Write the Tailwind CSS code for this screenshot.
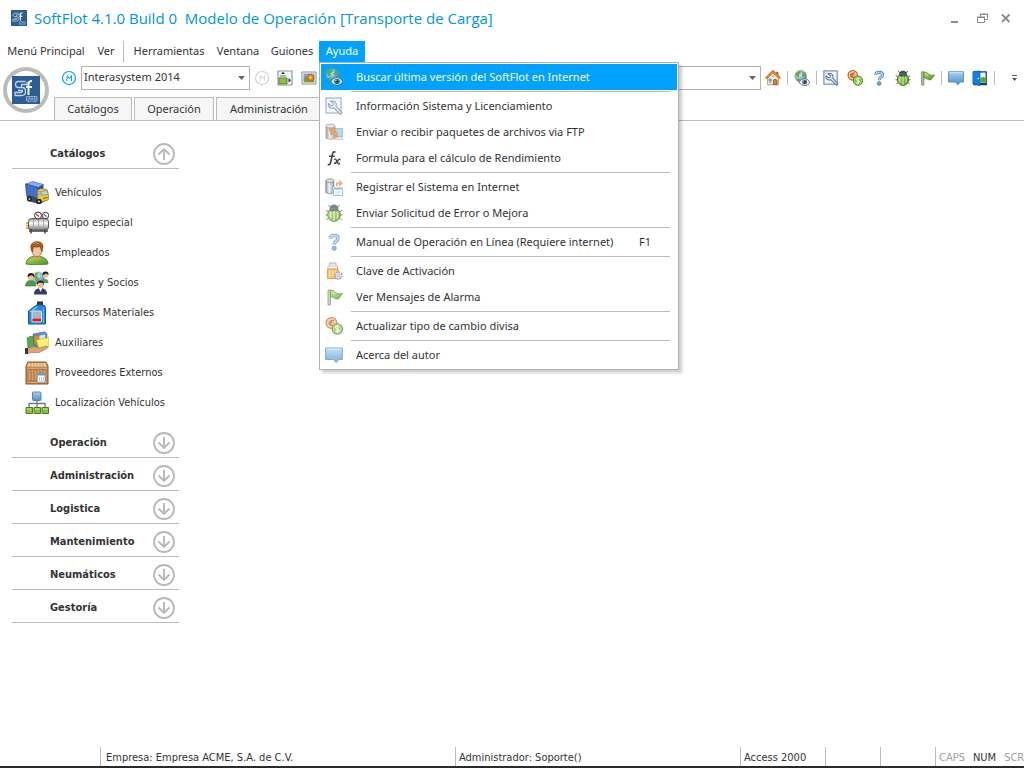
<!DOCTYPE html>
<html lang="es">
<head>
    <meta charset="UTF-8">
    <meta name="viewport" content="width=device-width, initial-scale=1.0">
    <title>SoftFlot 4.1.0</title>
    <script src="https://cdn.jsdelivr.net/npm/@tailwindcss/browser@4"></script>
</head>
<body class="min-h-screen flex flex-col overflow-hidden bg-white text-[#333333] text-[11px] font-['Noto_Sans','Open_Sans',sans-serif]">

    <!-- Icon definitions -->
    <svg class="absolute size-0" aria-hidden="true">
        <defs>
            <linearGradient id="gBlue" x1="0" y1="0" x2="0" y2="1"><stop offset="0" stop-color="#a9d3f2"/><stop offset="1" stop-color="#4a8fc9"/></linearGradient>
            <linearGradient id="gGreen" x1="0" y1="0" x2="1" y2="1"><stop offset="0" stop-color="#b5e06a"/><stop offset="1" stop-color="#4c8f1c"/></linearGradient>
            <linearGradient id="gSilver" x1="0" y1="0" x2="1" y2="0"><stop offset="0" stop-color="#6b6b6b"/><stop offset=".4" stop-color="#f0f0f0"/><stop offset="1" stop-color="#808080"/></linearGradient>
            <linearGradient id="gTank" x1="0" y1="0" x2="0" y2="1"><stop offset="0" stop-color="#9a9a9a"/><stop offset=".4" stop-color="#ffffff"/><stop offset="1" stop-color="#777777"/></linearGradient>
            <radialGradient id="gGlobe" cx=".35" cy=".3" r=".8"><stop offset="0" stop-color="#e4f4ff"/><stop offset=".6" stop-color="#7db4dc"/><stop offset="1" stop-color="#2f6596"/></radialGradient>

            <symbol id="logo" viewBox="0 0 28 28">
                <rect width="28" height="28" fill="#2b5d93"/>
                <path d="M13.500 5.500H6.500Q3.500 5.500 3.500 8.500T6.500 11.500H9.500V8.500H15V6M9.500 11.500H10.500Q13.500 11.500 13.500 15.500T10 19.500H3V16.500H9.500Q10.500 16.500 10.500 14.500H6" fill="none" stroke="#c3d3e4" stroke-width="1.300"/>
                <path d="M16.500 19V8Q16.500 5 20 5M14 11H20" fill="none" stroke="#edf3f8" stroke-width="2"/>
                <path d="M14.500 20.500H25V25H14.500zM14.500 23H25M17.500 20.500V23M20 20.500V23M22.500 20.500V23M16.500 25V26.500M23 25V26.500" fill="none" stroke="#8fadcb"/>
            </symbol>

            <symbol id="globe" viewBox="0 0 18 18">
                <circle cx="7.500" cy="7" r="6.500" fill="url(#gGlobe)" stroke="#6d9480" stroke-width=".8"/>
                <path d="M2 4Q4 0.800 8 1L7.500 3.500L5.500 5.500L6 7.500L3.500 8Q1.500 6 2 4zM9.500 2L12.500 3.500L13.800 7L11 8L9 6zM3 10L6 9.500L7.500 12L6 13.200Q3.500 12 3 10z" fill="#76a82f"/>
                <path d="M5.500 14Q8 9.500 12 9.500T18 14Q15.500 17.500 12 17.500T5.500 14z" fill="#f4f7fa" stroke="#5d7186" stroke-width="1.100"/>
                <circle cx="12" cy="13.500" r="2.800" fill="#4b6681"/><circle cx="12" cy="13.500" r="1.200" fill="#0e1d33"/>
                <circle cx="11" cy="12.500" r=".7" fill="#ffffff"/>
            </symbol>

            <symbol id="wrench" viewBox="0 0 18 18">
                <rect x="1" y="1" width="15" height="15" fill="#f2f6fd" stroke="#7289b8" stroke-width="1.300"/>
                <path d="M5 4.200Q8 3 10.300 5Q11.800 6.800 11 9.200L17 15.500L15.500 17.300L9 11Q6.500 12 4.500 10.300Q3 8.800 3.300 6.500L6 8.800L8.300 8L8.200 5.800z" fill="#dce5f4" stroke="#66799f" stroke-width="1.200" stroke-linejoin="round"/>
            </symbol>

            <symbol id="ftp" viewBox="0 0 18 18">
                <path d="M1 3V15Q5 18 10 15V3z" fill="url(#gSilver)" stroke="#777777" stroke-width=".7"/>
                <ellipse cx="5.500" cy="3" rx="4.500" ry="2" fill="#dddddd" stroke="#777777" stroke-width=".7"/>
                <path d="M10 5.500H17.500V14H10z" fill="#8bd1f3" stroke="#5d9bc5" stroke-width=".7"/>
                <path d="M10 14H16.500L18 16.500H9z" fill="#e6edf4" stroke="#8898aa" stroke-width=".6"/>
                <path d="M4 5.500L10.500 5L9.300 7.300Q13 9 12.500 14Q10 15.500 9.500 14Q10 11 7.300 10L6 12z" fill="#ef7b22" stroke="#c45d13" stroke-width=".5"/>
            </symbol>

            <symbol id="fx" viewBox="0 0 18 18">
                <path d="M10.500 3.200Q8.200 2 7.500 5L5.500 14Q5 16.300 2.700 15.500M4 7.300H9.500" fill="none" stroke="#171717" stroke-width="1.600"/>
                <path d="M9 10.500Q10.500 9.500 11.300 11L12.700 14Q13.300 15.300 15 14.300M15.500 10.500Q14 9.800 12.500 12T9 14.700" fill="none" stroke="#171717" stroke-width="1.400"/>
            </symbol>

            <symbol id="register" viewBox="0 0 18 18">
                <path d="M.8 2.500V14.500Q5 17.500 8.800 14.500V2.500z" fill="url(#gSilver)" stroke="#555555" stroke-width=".8"/>
                <ellipse cx="5" cy="2.700" rx="4" ry="1.900" fill="#cfcfcf" stroke="#555555" stroke-width=".7"/>
                <path d="M11 8V4.500H14V1.500L18 5.500L14 9V6.500H13V8z" fill="#f0953e"/>
                <path d="M8.500 9.500H17.500V17.500H8.500z" fill="#ffffff" stroke="#58a6de" stroke-width=".9"/>
                <path d="M8.500 9.500H17.500V11.500H8.500zM10 14H16M10 16H14" fill="#58a6de" stroke="#a6cfec"/>
            </symbol>

            <symbol id="bug" viewBox="0 0 18 18">
                <path d="M3.500 1L5.500 3.500M14.500 1L12.500 3.500M.8 6L3.500 8M17.200 6L14.500 8M.5 11H3M17.500 11H15M1.500 16L4 13.500M16.500 16L14 13.500" stroke="#4b5c36" stroke-width="1"/>
                <path d="M5 5.500Q5 1 9 1T13 5.500z" fill="#42515f" stroke="#26313b" stroke-width=".7"/>
                <ellipse cx="9" cy="10.700" rx="6.300" ry="6.700" fill="url(#gGreen)" stroke="#3b6c1b"/>
                <path d="M4 6Q9 3.500 14 6Q11 8 9 7.500Q6 8 4 6z" fill="#42515f"/>
                <path d="M9 7V17M6 8Q4.500 11 6 14.500M12 8Q13.500 11 12 14.500" fill="none" stroke="#e3f4b9" stroke-width="1.100"/>
            </symbol>

            <symbol id="help" viewBox="0 0 18 18">
                <path d="M5.200 5.500Q5.500 2.500 9.200 2.500T13 5.300Q13 7 11 8.200Q9.200 9.300 9.200 11.500" fill="none" stroke="#447bb4" stroke-width="3.400"/>
                <path d="M5.200 5.300Q5.500 2.500 9.200 2.500T13 5.300Q13 7 11 8.200Q9.200 9.300 9.200 11.300" fill="none" stroke="#a9d0f0" stroke-width="1.800"/>
                <circle cx="9.200" cy="15.200" r="2" fill="#77acdc" stroke="#3468a3" stroke-width=".9"/>
            </symbol>

            <symbol id="clipboard" viewBox="0 0 18 18">
                <path d="M4.500 3V1H11V3" fill="#dddddd" stroke="#999999"/>
                <path d="M3 4H12.500V7H3z" fill="#ffffff" stroke="#a98957" stroke-width=".8"/>
                <path d="M2.500 7H13L14 16.500H2.500z" fill="#f5ad3c" stroke="#c98421"/>
                <path d="M5 9V15M8 9V13M11 9V11" stroke="#ffd788" stroke-width="1.300"/>
                <circle cx="13.500" cy="13.500" r="3.400" fill="#e9ebf5" stroke="#8186a8" stroke-width="1.800" stroke-dasharray="1.800 .8"/>
                <circle cx="13.500" cy="13.500" r="1.200" fill="#ffffff" stroke="#666d94" stroke-width=".8"/>
            </symbol>

            <symbol id="flag" viewBox="0 0 18 18">
                <path d="M3 2H5.500V17H3z" fill="#b6c89a" stroke="#667951" stroke-width=".8"/>
                <path d="M5.500 2.500Q8 1.500 10.500 4.500Q13.500 7 17.500 5.500L13.500 11Q10 11.500 8.500 9.500Q7 8.500 5.500 9z" fill="url(#gGreen)" stroke="#437d1c" stroke-width=".8"/>
                <path d="M7 4Q9 4 10 6.500" fill="none" stroke="#daf3a8"/>
            </symbol>

            <symbol id="coins" viewBox="0 0 18 18">
                <circle cx="6.500" cy="6" r="5.400" fill="#f2ae72" stroke="#bf6428" stroke-width="1.200"/>
                <circle cx="6.500" cy="6" r="3.900" fill="none" stroke="#fbd5ad" stroke-width=".8"/>
                <path d="M9 3.700Q5 2.500 5 6T9 8.500M3.500 5.300H7.500M3.500 7H7" fill="none" stroke="#b65a21" stroke-width="1.100"/>
                <circle cx="12.300" cy="12" r="5.200" fill="#83bb42" stroke="#49841d" stroke-width="1.100"/>
                <circle cx="12.300" cy="12" r="3.900" fill="none" stroke="#c5e796" stroke-width=".7"/>
                <path d="M14.200 10Q10.300 8.500 10.600 10.700Q11 12 12.500 12T14 13.600Q13.500 15 10.500 14M12.400 8.300V15.700" fill="none" stroke="#ffffff" stroke-width="1.100"/>
            </symbol>

            <symbol id="bubble" viewBox="0 0 18 18">
                <path d="M.7 2H17.300V13.500H14L11 16.500L8.500 13.500H.7z" fill="url(#gBlue)" stroke="#4b83b6" stroke-width="1"/>
                <path d="M1.700 3H16.300" stroke="#d2e9fa"/>
            </symbol>

            <symbol id="house" viewBox="0 0 18 18">
                <path d="M12.500 2H15V7H12.500z" fill="#c7501d"/>
                <path d="M3 9V16.500H15V9L9 3z" fill="#fff3df" stroke="#c88a45"/>
                <path d="M1 9.500L9 1.500L17 9.500" fill="none" stroke="#c9641c" stroke-width="2.600"/>
                <path d="M1.500 9.200L9 1.800L16.500 9.200" fill="none" stroke="#ffb35b"/>
                <path d="M9.500 16.500V11.500Q11 9 13.500 11.500V16.500z" fill="#bd8553" stroke="#754622" stroke-width=".8"/>
                <path d="M4.500 10H7.500V12.500H4.500zM4.500 14H7.500" fill="#8ebbe4" stroke="#5f80ae" stroke-width=".7"/>
                <path d="M7.500 7H10.500" stroke="#6d90bb"/>
            </symbol>

            <symbol id="door" viewBox="0 0 18 18">
                <path d="M2 2H16V16.500H2z" fill="#edf5fc" stroke="#123e7c" stroke-width="1.400"/>
                <path d="M9.500 9Q12 7 15.300 8.500V14H9.500z" fill="#4daf2c"/>
                <path d="M1 2L9 1V17.500L1 15.500z" fill="#147ee3" stroke="#0756ad" stroke-width=".7"/>
                <circle cx="7" cy="9.500" r=".9" fill="#ffffff"/>
                <path d="M9 14.500H16.500V16.500H9z" fill="#153d6b"/>
            </symbol>

            <symbol id="resize" viewBox="0 0 16 16">
                <path d="M1 1H15V15H1z" fill="#f4f6fb" stroke="#8895b5" stroke-width="1.200"/>
                <path d="M2 8H10V14H2z" fill="#90bd43" stroke="#5c892a"/>
                <path d="M3 6H9" stroke="#5c892a"/>
                <path d="M4 4L6 1.800L8 4zM11.500 8L14 10.200L11.500 12.500z" fill="#333333"/>
            </symbol>

            <symbol id="photo" viewBox="0 0 16 16">
                <path d="M1 2H15V14H1z" fill="#ffffff" stroke="#7f8bab"/>
                <path d="M2.500 3.500H13.500V7H2.500z" fill="#6fa8dc"/><path d="M2.500 7H13.500V12.500H2.500z" fill="#7aa037"/>
                <circle cx="9.500" cy="7.500" r="3.200" fill="#ef8a1e" stroke="#c85c12" stroke-width="1.500" stroke-dasharray="1.500 1"/>
                <circle cx="9.500" cy="7.500" r="1.200" fill="#ffd95b"/>
            </symbol>

            <symbol id="mark" viewBox="0 0 16 16">
                <circle cx="8" cy="8" r="6.500" fill="none" stroke="currentColor" stroke-width="1.200"/>
                <path d="M5.500 11L6.500 5.500L8.300 9L10.500 5.500V11" fill="none" stroke="currentColor"/>
            </symbol>

            <symbol id="arrowDown" viewBox="0 0 22 22">
                <circle cx="11" cy="11" r="10" fill="none" stroke="#b8b8b8" stroke-width="1.800"/>
                <path d="M11 5V16M5.500 10.500L11 16L16.500 10.500" fill="none" stroke="#b8b8b8" stroke-width="1.900"/>
            </symbol>
            <symbol id="arrowUp" viewBox="0 0 22 22">
                <circle cx="11" cy="11" r="10" fill="none" stroke="#b8b8b8" stroke-width="1.800"/>
                <path d="M11 17V6M5.500 11.500L11 6L16.500 11.500" fill="none" stroke="#b8b8b8" stroke-width="1.900"/>
            </symbol>

            <symbol id="truck" viewBox="0 0 24 24">
                <path d="M1 14L3 20L14 23L23 19V16z" fill="#414b58"/>
                <path d="M.5 3L8 .5L18.500 3.500L13 6.500z" fill="#86adf0" stroke="#3d62ad" stroke-width=".6"/>
                <path d="M.5 3L13 6.500V17.500L1.500 13.500z" fill="#3c69c4" stroke="#274b96" stroke-width=".7"/>
                <path d="M4 4.500V14M7 5.300V15M10 6V16" stroke="#6089d8" stroke-width=".7"/>
                <path d="M18.500 3.500V8L13 10V6.500z" fill="#274b96"/>
                <path d="M12.500 9L16 7.500L22 8.500L23.500 14V18.500L17 21L12.500 18z" fill="#f2c92f" stroke="#a37914" stroke-width=".7"/>
                <path d="M16 10.500L22 9.500L23 13.500L16.500 14.500zM13 10L15 10.500V14L13 13z" fill="#a8d6ed" stroke="#607d8b" stroke-width=".5"/>
                <path d="M18 17.500L22.500 16.500" stroke="#715a1c"/>
                <circle cx="4.500" cy="18" r="2.500" fill="#20252b"/><circle cx="14" cy="20.500" r="2.800" fill="#20252b"/>
                <circle cx="4.500" cy="18" r=".9" fill="#cccccc"/><circle cx="14" cy="20.500" r="1.100" fill="#cccccc"/>
            </symbol>

            <symbol id="tank" viewBox="0 0 24 24">
                <path d="M1 12H4M1 14.500H4M1 17H4" stroke="#e8a313" stroke-width="1.500"/>
                <rect x="3.500" y="7.500" width="20" height="11.500" rx="3" fill="url(#gTank)" stroke="#555555"/>
                <path d="M8.500 7.500V19M13.500 7.500V19M18.500 7.500V19" stroke="#999999" stroke-width=".8"/>
                <path d="M4 20H23M6 18V22.500M20 18V22.500" stroke="#444444" stroke-width="1.500"/>
                <circle cx="13" cy="4.500" r="3.500" fill="#ffffff" stroke="#333333"/><circle cx="20.500" cy="4.500" r="3.200" fill="#ffffff" stroke="#333333"/>
                <path d="M11 3L14 5.500" stroke="#e31e1e" stroke-width="1.200"/><path d="M18.800 3.500L21.500 5.500" stroke="#218ac7" stroke-width="1.200"/>
            </symbol>

            <symbol id="person" viewBox="0 0 24 24">
                <path d="M1 23Q1.500 16.500 8 15.500H15Q22.500 16.500 23 23Q12 25 1 23z" fill="url(#gGreen)" stroke="#588b2b"/>
                <path d="M8.500 14.500H15L14.500 17L12 19.500L9 17z" fill="#dd9d69"/>
                <ellipse cx="12" cy="9.500" rx="4.800" ry="6.300" fill="#f4c596" stroke="#9b5720" stroke-width=".7"/>
                <path d="M6.500 10Q5 5 6.500 3Q9 .2 13 .7Q18 1 18 6L17 11Q16 8 15 5.500Q11 7 8.500 5.500L7.500 11z" fill="#a55d21" stroke="#77400f" stroke-width=".6"/>
                <path d="M8 2.500Q11 1 14 2.500" fill="none" stroke="#d69354"/>
            </symbol>

            <symbol id="people" viewBox="0 0 24 24">
                <circle cx="13" cy="7" r="6.500" fill="url(#gGlobe)"/><path d="M10 2L14 1L12 5L15 8L12 12L9 7z" fill="#6eab53"/>
                <path d="M.5 15Q1 9.500 5.500 9.500T11 15z" fill="#4b9d4c" stroke="#2d6b35" stroke-width=".6"/>
                <path d="M17 9Q23 6 23.500 12H17z" fill="#4ba14a"/>
                <circle cx="6" cy="6" r="3.200" fill="#efbd8b"/><path d="M2.700 6.500Q2 2 6 2T9.300 6.500L7.500 4.500H5z" fill="#292019"/>
                <circle cx="20.500" cy="4" r="2.700" fill="#efbd8b"/><path d="M17.500 4.500Q17 .5 20.500 .5T23.500 4L21 2.500z" fill="#292019"/>
                <path d="M9 23.500Q9 17 15.500 17T22 23.500z" fill="#343b66"/>
                <path d="M13.500 16.500H17.500L15.500 21z" fill="#ffffff"/>
                <circle cx="15.500" cy="13.500" r="3.400" fill="#efbd8b"/><path d="M12 14Q11.500 9.500 15.500 9.500T19 14L17.500 11.700H13.500z" fill="#292019"/>
            </symbol>

            <symbol id="canister" viewBox="0 0 24 24">
                <path d="M12 .5H18V4H12z" fill="#30343b"/>
                <path d="M3.500 10L11.500 4H18Q20.500 4 20.500 7V23H3.500z" fill="#2988d0" stroke="#155b9b"/>
                <path d="M5 11L12 6" stroke="#8ccbf5" stroke-width="1.500"/>
                <rect x="7" y="10" width="9.500" height="11" rx="1" fill="#a9b5c2" stroke="#d5e7f5"/>
                <path d="M7.500 19H16" stroke="#f01818" stroke-width="2.600"/>
                <path d="M18.500 7V22" stroke="#60b3eb"/>
            </symbol>

            <symbol id="folders" viewBox="0 0 24 24">
                <path d="M2 7L5 5.500H14V18L3 17z" fill="#54a84f" stroke="#327a36" stroke-width=".6"/>
                <path d="M8 3L20 .8L22 3V12L9 15z" fill="#5d94c9" stroke="#376b9e" stroke-width=".6"/>
                <path d="M10 5.500L20 3.500V10H10z" fill="#d3e5f3"/>
                <path d="M9 5L14 4V13H9z" fill="#d78841" stroke="#a65a1e" stroke-width=".5"/>
                <path d="M11.500 9L24 6.500V16L14 18.500z" fill="#fff170" stroke="#c7b331" stroke-width=".7"/>
                <path d="M1 17.500L9 15.500L13.500 17L22 15Q23.500 16 22 17.500L14 21.500H6L1 23z" fill="#dda276" stroke="#9e6946" stroke-width=".6"/>
                <path d="M0 17H3V23H0z" fill="#353942"/>
            </symbol>

            <symbol id="crate" viewBox="0 0 24 24">
                <path d="M3 1H21L23 5V23H1V5z" fill="#c58a54" stroke="#85542a"/>
                <path d="M3.500 2L2 5.500H22L20.500 2z" fill="#efcca1"/>
                <path d="M6 2V5M9 2V5M12 2V5M15 2V5M18 2V5" stroke="#ba8147" stroke-width=".7"/>
                <path d="M2 7.500H22M2 21.500H22" stroke="#dba46e"/>
                <path d="M3 8.500H21V20H3z" fill="#946039"/>
                <path d="M4.500 9V19.500M7.500 9V19.500M10.500 9V19.500M13.500 9V19.500M16.500 9V19.500M19.500 9V19.500" stroke="#d9a06a" stroke-width="2.200"/>
                <path d="M12.500 13H20V21H12.500z" fill="#ffffff" stroke="#94adc4" stroke-width=".7"/>
                <path d="M12.500 13.500H20" stroke="#3da9e6" stroke-width="2"/><path d="M14 17H19M14 19H19" stroke="#6c92b5" stroke-dasharray="1 1"/>
            </symbol>

            <symbol id="network" viewBox="0 0 24 24">
                <path d="M12 9V17M4 17V12.500H20V17" fill="none" stroke="#6a7b91" stroke-width="1.300"/>
                <rect x="7.500" y="1" width="8.500" height="8.500" rx="1" fill="url(#gBlue)" stroke="#5986b0"/>
                <path d="M1 16.500H7.500V22.500H1zM9 16.500H15.500V22.500H9zM17 16.500H23.500V22.500H17z" fill="#8abe3b" stroke="#4b7c1f"/>
                <path d="M2 18H6.500M10 18H14.500M18 18H22.500" stroke="#c5e892"/>
            </symbol>
        </defs>
    </svg>

    <!-- Title bar -->
    <header class="h-[41px] shrink-0 flex items-start pl-[11px] pr-2">
        <svg class="size-4 mt-[10px] mr-[7px]"><use href="#logo"/></svg>
        <h1 class="flex-1 pt-2 text-[15px] leading-5 text-[#0095dc] whitespace-pre font-['Open_Sans','Noto_Sans',sans-serif]">SoftFlot 4.1.0 Build 0  Modelo de Operación [Transporte de Carga]</h1>
        <div class="flex pt-2 gap-1 text-[#8c8c8c]">
            <button type="button" aria-label="Minimizar" class="size-5 mr-1 grid place-items-center"><svg class="size-3" viewBox="0 0 12 12"><path d="M3 10H10" stroke="currentColor" stroke-width="2"/></svg></button>
            <button type="button" aria-label="Restaurar" class="size-5 grid place-items-center"><svg class="size-3" viewBox="0 0 12 12" fill="none" stroke="currentColor"><path d="M1.500 5.500H8.500V10.500H1.500zM4.500 5V2.500H11.500V7.500H9M4 2H12M1 5H9"/></svg></button>
            <button type="button" aria-label="Cerrar" class="size-5 grid place-items-center"><svg class="size-3" viewBox="0 0 12 12"><path d="M2 2.500L9.500 10M9.500 2.500L2 10" stroke="currentColor" stroke-width="1.800"/></svg></button>
        </div>
    </header>

    <!-- Menu bar -->
    <nav class="h-[21px] shrink-0 flex items-stretch whitespace-nowrap">
        <button type="button" class="w-[92px]">Menú Principal</button>
        <button type="button" class="w-7">Ver</button>
        <div class="w-px mx-[3px] bg-[#bbbbbb]"></div>
        <button type="button" class="w-[84px]">Herramientas</button>
        <button type="button" class="w-[54px]">Ventana</button>
        <button type="button" class="w-[54px]">Guiones</button>
        <div class="relative w-[46px]">
            <button type="button" class="size-full bg-[#00a2ff] text-white" aria-expanded="true">Ayuda</button>

            <!-- Ayuda menu -->
            <div role="menu" class="absolute left-0 top-full z-10 w-[360px] flex flex-col p-px border border-[#b0b0b0] bg-white shadow-[3px_3px_3px_rgba(0,0,0,0.2)]">
                <button type="button" role="menuitem" class="h-[26px] flex items-center gap-[13px] pl-1 bg-[#00a2ff] text-white"><svg class="size-[18px] shrink-0 opacity-80"><use href="#globe"/></svg>Buscar última versión del SoftFlot en Internet</button>
                <hr class="ml-[30px] mr-[7px] my-px border-[#bbbbbb]">
                <button type="button" role="menuitem" class="h-[26px] flex items-center gap-[13px] pl-1"><svg class="size-[18px] shrink-0 opacity-60"><use href="#wrench"/></svg>Información Sistema y Licenciamiento</button>
                <button type="button" role="menuitem" class="h-[26px] flex items-center gap-[13px] pl-1"><svg class="size-[18px] shrink-0 opacity-70"><use href="#ftp"/></svg>Enviar o recibir paquetes de archivos via FTP</button>
                <button type="button" role="menuitem" class="h-[26px] flex items-center gap-[13px] pl-1"><svg class="size-[18px] shrink-0 opacity-80"><use href="#fx"/></svg>Formula para el cálculo de Rendimiento</button>
                <hr class="ml-[30px] mr-[7px] my-px border-[#bbbbbb]">
                <button type="button" role="menuitem" class="h-[26px] flex items-center gap-[13px] pl-1"><svg class="size-[18px] shrink-0 opacity-70"><use href="#register"/></svg>Registrar el Sistema en Internet</button>
                <button type="button" role="menuitem" class="h-[26px] flex items-center gap-[13px] pl-1"><svg class="size-[18px] shrink-0 opacity-70"><use href="#bug"/></svg>Enviar Solicitud de Error o Mejora</button>
                <hr class="ml-[30px] mr-[7px] my-px border-[#bbbbbb]">
                <button type="button" role="menuitem" class="h-[26px] flex items-center gap-[13px] pl-1 pr-[26px]"><svg class="size-[18px] shrink-0 opacity-70"><use href="#help"/></svg>Manual de Operación en Línea (Requiere internet)<span class="ml-auto">F1</span></button>
                <hr class="ml-[30px] mr-[7px] my-px border-[#bbbbbb]">
                <button type="button" role="menuitem" class="h-[26px] flex items-center gap-[13px] pl-1"><svg class="size-[18px] shrink-0 opacity-70"><use href="#clipboard"/></svg>Clave de Activación</button>
                <button type="button" role="menuitem" class="h-[26px] flex items-center gap-[13px] pl-1"><svg class="size-[18px] shrink-0 opacity-70"><use href="#flag"/></svg>Ver Mensajes de Alarma</button>
                <hr class="ml-[30px] mr-[7px] my-px border-[#bbbbbb]">
                <button type="button" role="menuitem" class="h-[26px] flex items-center gap-[13px] pl-1"><svg class="size-[18px] shrink-0 opacity-70"><use href="#coins"/></svg>Actualizar tipo de cambio divisa</button>
                <hr class="ml-[30px] mr-[7px] my-px border-[#bbbbbb]">
                <button type="button" role="menuitem" class="h-[26px] flex items-center gap-[13px] pl-1"><svg class="size-[18px] shrink-0 opacity-70"><use href="#bubble"/></svg>Acerca del autor</button>
            </div>
        </div>
    </nav>

    <!-- Toolbar and tabs -->
    <section class="flex pt-1 shrink-0 border-b border-[#bbbbbb]">
        <button type="button" aria-label="SoftFlot" class="size-[46px] mt-px ml-[3px] mr-[5px] shrink-0 rounded-full border-4 border-[#bbbbbb] grid place-items-center"><svg class="size-7"><use href="#logo"/></svg></button>
        <div class="flex-1 min-w-0">
            <div class="h-6 flex items-center pl-[7px] pr-[6px]">
                <button type="button" aria-label="Marcar" class="text-[#00a2ff]"><svg class="size-4"><use href="#mark"/></svg></button>
                <div class="relative ml-1 w-[169px] shrink-0">
                    <select aria-label="Empresa" class="block w-full h-6 pl-[2px] pb-px border border-[#b4b4b4] bg-white appearance-none"><option>Interasystem 2014</option></select>
                    <svg class="absolute right-[5px] top-[10px] w-[7px] h-1 pointer-events-none" viewBox="0 0 7 4"><path d="M0 0H7L3.500 4z" fill="#666666"/></svg>
                </div>
                <button type="button" aria-label="Desmarcar" class="ml-1 text-[#d2d2d2]"><svg class="size-4"><use href="#mark"/></svg></button>
                <button type="button" aria-label="Organizar" class="ml-[7px]"><svg class="size-4"><use href="#resize"/></svg></button>
                <button type="button" aria-label="Fondo" class="ml-2"><svg class="size-4"><use href="#photo"/></svg></button>
                <div class="relative ml-6 flex-1">
                    <select aria-label="Dirección" class="block w-full h-6 pl-[3px] border border-[#b4b4b4] bg-white appearance-none"><option></option></select>
                    <svg class="absolute right-[5px] top-[10px] w-[7px] h-1 pointer-events-none" viewBox="0 0 7 4"><path d="M0 0H7L3.500 4z" fill="#666666"/></svg>
                </div>
                <button type="button" aria-label="Inicio" class="ml-1"><svg class="size-4"><use href="#house"/></svg></button>
                <div class="w-px h-[14px] mx-[6px] bg-[#bbbbbb]"></div>
                <button type="button" aria-label="Buscar versión"><svg class="size-4"><use href="#globe"/></svg></button>
                <div class="w-px h-[14px] mx-[6px] bg-[#bbbbbb]"></div>
                <div class="flex gap-2">
                    <button type="button" aria-label="Información"><svg class="size-4"><use href="#wrench"/></svg></button>
                    <button type="button" aria-label="Divisa"><svg class="size-4"><use href="#coins"/></svg></button>
                    <button type="button" aria-label="Manual"><svg class="size-4"><use href="#help"/></svg></button>
                    <button type="button" aria-label="Error"><svg class="size-4"><use href="#bug"/></svg></button>
                    <button type="button" aria-label="Alarma"><svg class="size-4"><use href="#flag"/></svg></button>
                </div>
                <div class="w-px h-[14px] mx-[6px] bg-[#bbbbbb]"></div>
                <div class="flex gap-2">
                    <button type="button" aria-label="Autor"><svg class="size-4"><use href="#bubble"/></svg></button>
                    <button type="button" aria-label="Salir"><svg class="size-4"><use href="#door"/></svg></button>
                </div>
                <div class="w-px h-[14px] mx-[6px] bg-[#bbbbbb]"></div>
                <button type="button" aria-label="Más botones" class="ml-[10px]"><svg class="w-[7px] h-[6px]" viewBox="0 0 7 6"><path d="M1 0H6V1H1zM1 3H6L3.500 6z" fill="#555555"/></svg></button>
            </div>
            <div class="mt-[7px] flex gap-[2px]">
                <button type="button" class="w-[78px] h-[23px] pt-px border border-b-0 border-[#bbbbbb] bg-[#f6f6f6]">Catálogos</button>
                <button type="button" class="w-20 h-[23px] pt-px border border-b-0 border-[#bbbbbb] bg-[#f6f6f6]">Operación</button>
                <button type="button" class="w-[106px] h-[23px] pt-px border border-b-0 border-[#bbbbbb] bg-[#f6f6f6]">Administración</button>
            </div>
        </div>
    </section>

    <!-- Side navigation -->
    <main class="flex-1 pt-[15px] pl-3 text-[11px] font-['DejaVu_Sans_Condensed','DejaVu_Sans',sans-serif]">
        <aside class="w-[167px]">
            <button type="button" class="w-full h-[33px] pl-[38px] pr-1 pb-px pt-1 flex items-center justify-between border-b border-[#bbbbbb] font-bold"><span class="pt-[2px]">Catálogos</span><svg class="size-[22px]"><use href="#arrowUp"/></svg></button>
            <ul class="pt-[9px] pb-[7px] pl-[13px]">
                <li><a href="#" class="h-[30px] flex items-center gap-[6px] whitespace-nowrap"><svg class="size-6 shrink-0"><use href="#truck"/></svg>Vehículos</a></li>
                <li><a href="#" class="h-[30px] flex items-center gap-[6px] whitespace-nowrap"><svg class="size-6 shrink-0"><use href="#tank"/></svg>Equipo especial</a></li>
                <li><a href="#" class="h-[30px] flex items-center gap-[6px] whitespace-nowrap"><svg class="size-6 shrink-0"><use href="#person"/></svg>Empleados</a></li>
                <li><a href="#" class="h-[30px] flex items-center gap-[6px] whitespace-nowrap"><svg class="size-6 shrink-0"><use href="#people"/></svg>Clientes y Socios</a></li>
                <li><a href="#" class="h-[30px] flex items-center gap-[6px] whitespace-nowrap"><svg class="size-6 shrink-0"><use href="#canister"/></svg>Recursos Materiales</a></li>
                <li><a href="#" class="h-[30px] flex items-center gap-[6px] whitespace-nowrap"><svg class="size-6 shrink-0"><use href="#folders"/></svg>Auxiliares</a></li>
                <li><a href="#" class="h-[30px] flex items-center gap-[6px] whitespace-nowrap"><svg class="size-6 shrink-0"><use href="#crate"/></svg>Proveedores Externos</a></li>
                <li><a href="#" class="h-[30px] flex items-center gap-[6px] whitespace-nowrap"><svg class="size-6 shrink-0"><use href="#network"/></svg>Localización Vehículos</a></li>
            </ul>
            <button type="button" class="w-full h-[33px] pl-[38px] pr-1 pb-px pt-1 flex items-center justify-between border-b border-[#bbbbbb] font-bold"><span class="pt-[2px]">Operación</span><svg class="size-[22px]"><use href="#arrowDown"/></svg></button>
            <button type="button" class="w-full h-[33px] pl-[38px] pr-1 pb-px pt-1 flex items-center justify-between border-b border-[#bbbbbb] font-bold"><span class="pt-[2px]">Administración</span><svg class="size-[22px]"><use href="#arrowDown"/></svg></button>
            <button type="button" class="w-full h-[33px] pl-[38px] pr-1 pb-px pt-1 flex items-center justify-between border-b border-[#bbbbbb] font-bold"><span class="pt-[2px]">Logistica</span><svg class="size-[22px]"><use href="#arrowDown"/></svg></button>
            <button type="button" class="w-full h-[33px] pl-[38px] pr-1 pb-px pt-1 flex items-center justify-between border-b border-[#bbbbbb] font-bold"><span class="pt-[2px]">Mantenimiento</span><svg class="size-[22px]"><use href="#arrowDown"/></svg></button>
            <button type="button" class="w-full h-[33px] pl-[38px] pr-1 pb-px pt-1 flex items-center justify-between border-b border-[#bbbbbb] font-bold"><span class="pt-[2px]">Neumáticos</span><svg class="size-[22px]"><use href="#arrowDown"/></svg></button>
            <button type="button" class="w-full h-[33px] pl-[38px] pr-1 pb-px pt-1 flex items-center justify-between border-b border-[#bbbbbb] font-bold"><span class="pt-[2px]">Gestoría</span><svg class="size-[22px]"><use href="#arrowDown"/></svg></button>
        </aside>
    </main>

    <!-- Status bar -->
    <footer class="shrink-0 flex border-b-2 border-[#2b2b2b] text-[11px] leading-[17px] whitespace-nowrap font-['DejaVu_Sans_Condensed','DejaVu_Sans',sans-serif]">
        <div class="w-[100px]"></div>
        <div class="flex-1 border-l border-[#bbbbbb] pt-[2px] pl-[5px]">Empresa: Empresa ACME, S.A. de C.V.</div>
        <div class="w-[285px] border-l border-[#bbbbbb] pt-[2px] pl-[3px]">Administrador: Soporte()</div>
        <div class="w-[85px] border-l border-[#bbbbbb] pt-[2px] pl-[3px]">Access 2000</div>
        <div class="w-[55px] border-l border-[#bbbbbb]"></div>
        <div class="w-[55px] border-l border-[#bbbbbb]"></div>
        <div class="w-[89px] border-l border-[#bbbbbb] pt-[2px] pl-[3px] flex gap-2 overflow-hidden text-[#a0a0a0]"><span>CAPS</span><span class="text-[#333333]">NUM</span><span>SCR</span></div>
    </footer>
</body>
</html>
